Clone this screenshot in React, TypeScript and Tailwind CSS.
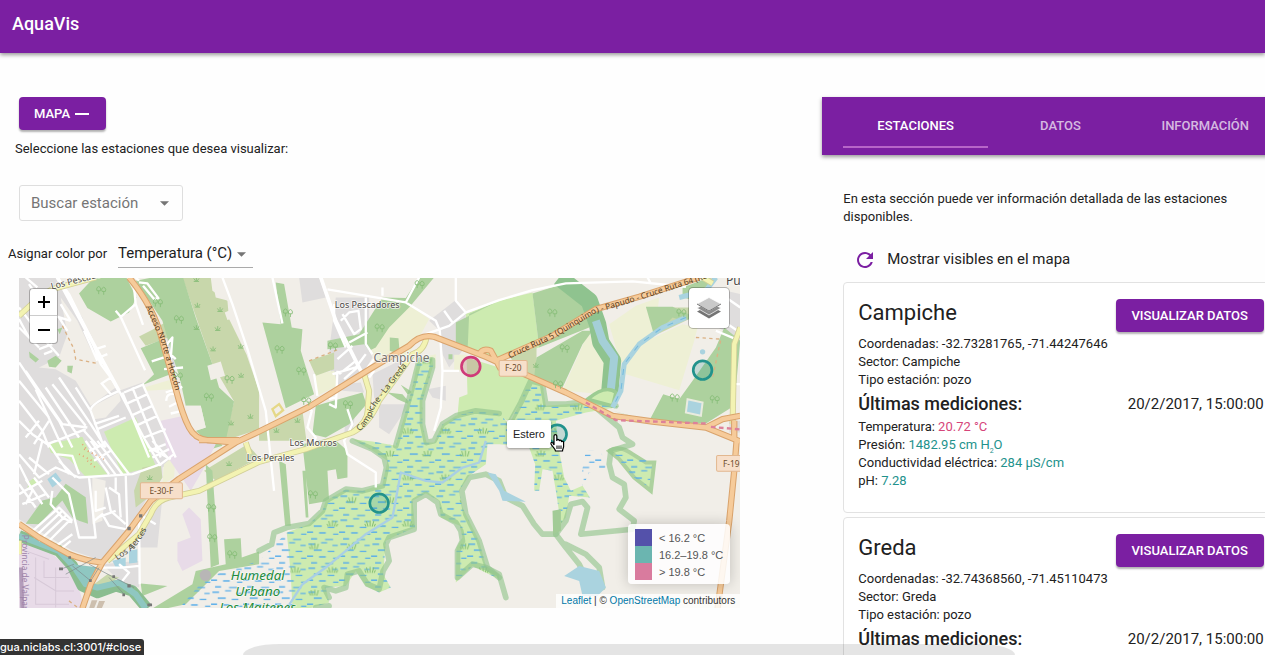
import React from 'react';

type Measure = { label: string; value: React.ReactNode; tone: string };
type Station = { name: string; coords: string; sector: string; kind: string; date: string; measures: Measure[] };

const pink = 'text-[#d6457a]';
const teal = 'text-[#22928c]';

const measures: Measure[] = [
  { label: 'Temperatura', value: '20.72 °C', tone: pink },
  { label: 'Presión', value: <>1482.95 cm H<sub className="-bottom-1 text-[7px]">2</sub>O</>, tone: teal },
  { label: 'Conductividad eléctrica', value: '284 μS/cm', tone: teal },
  { label: 'pH', value: '7.28', tone: teal },
];

const stations: Station[] = [
  { name: 'Campiche', coords: '-32.73281765, -71.44247646', sector: 'Campiche', kind: 'pozo', date: '20/2/2017, 15:00:00', measures },
  { name: 'Greda', coords: '-32.74368560, -71.45110473', sector: 'Greda', kind: 'pozo', date: '20/2/2017, 15:00:00', measures },
];

const raised = 'rounded-[4px] bg-[#7b1fa2] text-[13px] font-medium text-white shadow-[0_2px_2px_rgba(0,0,0,0.3)]';

const forest = [
  'M180 48L225 0H322L352 60L330 105L275 132L205 92Z',
  'M400 0H492L530 120L580 260L600 330L645 372L620 490H562L530 460L560 450L545 385L500 385L482 300L462 240L430 130L350 10Z',
  'M365 212L430 185L468 285L372 322L405 290Z',
  'M85 250L110 235L128 250L110 270L90 268Z', 'M145 265L162 265L158 288L145 282Z', 'M30 222L60 245L50 255L32 240Z', 'M115 155L130 150L122 170Z',
  'M20 739L70 669L110 659L140 619L200 659L207 739L180 730L160 719L130 669L90 709L60 740Z',
  'M560 560L580 580L600 860L575 870Z', 'M615 785L665 782L668 840L720 822V860L600 880L500 980L440 993L400 993L520 920L530 880L620 860Z', 'M365 918L445 925L370 955Z', 'M585 500L600 490L610 505L560 520Z',
  'M730 135L785 140L770 15L795 20L818 150L850 155L845 220L885 350L800 392Z',
  'M890 385L1030 345L1042 380L990 440L920 480L880 470Z',
  'M850 500L940 480L985 520L985 600L955 605L950 575L925 580L930 670L870 680Z',
  'M780 550L800 560L815 745H798Z', 'M850 580L860 580L868 720H860Z',
  'M925 190L1020 170L1090 60L1160 62L1200 0H1245L1172 88L1110 150L1070 210L1050 220L1035 200L925 215Z',
  'M1112 180L1138 182L1142 230L1112 220Z', 'M1145 322L1182 345L1165 350Z', 'M1105 345L1150 350L1180 385L1135 365Z', 'M1288 230H1300V245H1288Z',
  'M1310 135L1440 70L1350 110L1345 225L1310 212Z',
  'M1540 48L1630 20L1700 60L1740 110L1710 150L1560 210Z',
  'M1552 240L1690 160L1720 160L1690 200L1630 330L1545 298Z',
  'M1780 400L1890 430L1932 350L1980 365L2020 310L2090 210L2115 150L2163 190L2145 385L2060 438L1900 435Z',
  'M1880 88H1960L2030 120L1990 130L1960 120L1905 175Z', 'M1990 30L2070 0L2085 10L2010 65L1990 60Z',
];
const scrub = [
  'M490 0H575L580 40L625 70L630 125L682 230L720 340V455L615 490L645 372L580 260Z',
  'M360 177L400 157L465 120L470 172L380 205Z', 'M345 640L370 570L425 560L430 600L400 650L350 690Z', 'M555 580L685 500L720 540L590 610Z', 'M225 920L265 890L300 900L240 935Z',
  'M720 460L850 400L862 490L720 490Z', 'M870 250L945 225V275L890 295Z', 'M1465 225L1552 200V300L1500 285Z', 'M1930 90L2010 90L2020 120L1905 175Z',
];
const residential = [
  'M0 0H110L190 120L235 240L300 340L370 315L475 540L430 570L430 600L380 670L300 800L250 850L160 820L0 725Z',
  'M440 175L480 170L505 260L465 275Z', 'M370 740L420 680L430 660L415 810H360Z', 'M250 860L360 850V930L300 910Z',
  'M950 60L1050 60V220L1060 240L1030 290L940 330L930 220Z', 'M840 0H900L920 60L850 75Z', 'M1060 290L1150 245L1110 320L1080 380L1065 360Z',
  'M1080 380L1170 380L1150 410L1110 470L1080 450Z', 'M980 400L1010 400L1000 460L975 480Z', 'M1230 130L1310 68L1340 110L1330 220L1290 270L1270 230L1262 160Z', 'M1225 335L1280 325V370L1240 360Z',
  'M2080 140L2120 40L2163 50V190Z', 'M2130 430H2163V465H2130Z', 'M960 320L1025 315L1035 345L970 340Z',
];
const beige = [
  'M125 60L175 130L215 215L255 270L290 330L215 385L170 310L110 275L60 270L120 240L145 170Z', 'M220 600L260 610L250 730L220 740Z', 'M215 390L300 345L305 370L260 420L225 425Z',
  'M565 265L605 252L618 295L575 308Z', 'M500 385L545 385L560 450L530 460Z', 'M580 10L620 5L628 70L590 60Z', 'M617 105L640 95L650 120L625 128Z',
];
const grass = [
  'M255 463L350 420L410 565L310 590Z', 'M88 500L190 478L215 530L265 590L200 598L150 545L95 525Z',
  'M1340 110L1440 70L1540 45L1560 210L1440 245L1345 220Z', 'M1342 240L1440 270L1540 298L1500 380L1470 430L1370 402L1315 415L1320 360L1345 350Z', 'M30 612L50 598L55 615L25 632Z',
];
const farmland = [
  'M1050 200L1120 95L1170 82L1230 125L1200 180L1165 235L1070 250Z', 'M888 290L945 280L955 325L895 355Z', 'M1305 232H1342V280H1305Z', 'M375 330L460 305L480 320L455 335L385 340Z',
  'M1770 140L1850 85L1920 60L1905 180L1990 140L2035 150L2025 190L1980 338L1820 290L1790 210Z', 'M1705 170L1740 190L1765 260L1745 350L1630 338L1670 250Z', 'M1200 240L1250 230L1250 270L1180 290Z', 'M435 560L470 530L465 600L430 620Z',
];
const industry = [
  'M425 430L495 415L520 480L590 500L550 580L515 640L450 545Z', 'M0 780L100 830L160 880L185 950L195 993H0Z', 'M475 795L515 780L490 710L510 690L545 725L550 850L490 880L475 850Z',
];
const wetland =
  'M1310 415L1370 400L1440 408L1470 440L1500 380L1530 310L1570 320L1580 385L1640 380L1720 372L1800 388L1700 405L1610 430L1620 520L1635 600L1655 640L1690 625L1712 660L1650 655L1640 720L1625 738L1610 640L1600 580L1570 575L1560 640L1545 640L1548 560L1530 510L1440 500H1405L1400 560L1350 595L1320 640L1330 690L1380 790L1400 865L1440 890L1440 905L1360 865L1310 915L1312 810L1330 780L1322 745L1265 720L1260 670L1220 648L1180 670L1188 750L1140 770L1100 790L1092 890L1115 930L1080 945L1040 925L1010 880L980 925L920 930L930 975L870 993H820L815 890L803 765L870 740L910 700L920 670L980 635L1030 640L1090 620L1105 550L1060 520L1000 485L1060 492L1130 505L1160 400L1180 330L1195 250L1240 238L1242 265L1210 370L1210 440L1222 495L1245 495L1270 440Z';

const trunkRoads =
  'M330 0Q405 90 430 190L480 370Q500 440 520 465Q540 490 590 490L650 495L720 462L870 388L1060 270L1170 205Q1205 168 1245 178L1400 238L1500 283L1640 345L1780 415L1900 432L2060 450L2163 492M2060 450L2110 425L2163 415M1380 232Q1390 210 1415 220L1445 275M1430 250L1600 175L1730 95L1860 58L2040 0M650 495L480 604L395 670L330 760L250 855L215 920L190 993M0 739L60 780L150 830Q200 850 250 855M540 488H660M2145 430V480M2152 490L2145 580L2130 730L2095 993';
const secondaryRoads =
  'M0 115L60 60L100 35L230 0M265 850L360 770L395 710Q410 670 450 660L540 640L720 553L860 515L1000 465Q1050 430 1046 390L1050 340L1035 290M1000 465Q1050 440 1080 370L1160 260L1180 230Q1215 220 1222 180M2163 150L2145 200L2140 440M680 495L692 530M2050 0L2080 18M0 830V790';

const minorRoads = [
  'M115 0L150 50L215 180L245 260L275 300L300 340L390 510L455 545',
  'M290 100L305 118L378 278M305 118L350 80L345 30M350 80L372 142M350 0L360 10',
  'M360 15L385 18L418 62L405 65L372 25', 'M398 252L435 240M435 275L492 270M440 205L460 180L455 245M445 222L470 245M440 345L490 328M442 370Q440 345 470 350M450 388L485 370M455 408L490 400',
  'M0 255L50 330L120 430L160 510M0 310L90 420M20 280L130 440L205 450M0 370L70 460L90 510M50 335L130 510M80 330L180 480M100 320L200 445M120 300L215 440L260 510M170 330L215 400L255 510M195 460L240 510M215 400Q210 380 300 340M245 320L275 300M250 320L275 350',
  'M0 430L40 470L85 500L150 475L200 455M20 480L60 430M45 500L90 430M225 440L300 415M235 455L320 420',
  'M310 345L390 540M340 330L425 540M370 318L470 540M320 380L385 350M335 415L400 385M350 445L415 415M375 480L440 455M315 345L375 320',
  'M0 125L30 180M0 90L70 180L120 235M30 20L90 110L155 130M20 0L55 30M0 150L60 210M60 215L100 200M75 230L100 220M125 80L155 130M120 120L145 160',
  'M195 160L235 250M200 150L250 260M230 215L260 205M240 240L265 230',
  'M200 490L270 590M215 490L290 592M235 490L310 590M255 490L330 590M210 520L255 500M225 550L275 520M380 490L425 565M400 490L450 545M390 520L440 500M400 540L450 515',
  'M0 530L60 600L110 570L180 600L340 590L425 560L465 530M0 560L40 640L20 680M30 540L90 590M70 490L45 590M90 500L150 590M110 530L160 535L180 590M120 550L170 600M100 600L150 650L180 780L230 780L210 600',
  'M0 620L50 690M20 605L70 680M45 600L90 660M0 650L70 610M10 680L80 650M100 640L95 680L130 720L160 735',
  'M30 770L120 690L160 730M45 780L130 700M60 790L140 715M80 800L150 730M105 810L160 770M125 815L155 790',
  'M225 730L250 710L270 745L320 755M260 630L275 700L320 740M270 630L300 650L305 720M320 590L325 760M290 600V640M230 640V700L260 690M235 720L290 700',
  'M360 710L362 920M250 870L310 870L360 865M300 860L330 885L310 910M360 710L410 740', 'M610 0L640 80L685 215L740 400L765 640',
  'M905 0L950 130L1030 290', 'M925 36L1160 75L1250 130L1262 160L1270 280L1265 390L1245 460', 'M1090 30V55M1200 0L1160 75M1310 0V70L1340 105',
  'M1220 170L1290 145L1340 105L1440 68L1540 38L1640 18L1840 12L2000 28M1275 100L1300 135M1270 280H1320',
  'M1040 60V200L1060 230M965 130L990 105L1018 100L1025 155L1005 170L970 110M945 80V130L980 210M990 195L1045 165M940 290L1010 270L1040 230M960 290L1010 250M975 305L1020 265M955 280L950 390L930 380M950 360L930 365M885 290L895 355M860 390L878 400L865 450L890 480L880 510',
  'M985 395L1000 440L975 490L985 530L1070 585V630M760 0L790 138M1030 290L1065 245M1050 300L1065 280M1000 205L955 245',
  'M1885 0L1895 18M2110 130L2163 165M2120 60L2163 90M2090 160L2150 185M2140 320H2163',
];

const treeMarks: [number, number][] = [
  [245, 38], [415, 75], [478, 125], [630, 305], [568, 358], [475, 295], [780, 215], [845, 280], [860, 370], [985, 380], [805, 105], [940, 205], [1080, 150], [1200, 20], [1598, 105], [1635, 212], [1615, 320], [1965, 360], [2085, 365], [1985, 105], [575, 690], [578, 780], [638, 830], [880, 650],
];
const shrubMarks: [number, number][] = [
  [532, 8], [535, 85], [603, 98], [532, 152], [596, 155], [582, 216], [665, 208], [666, 295], [694, 418], [636, 438], [392, 602], [630, 560], [772, 460], [835, 430], [1550, 265],
];

function MapArt() {
  return (
    <svg className="block h-full w-full" viewBox="0 0 2163 993" preserveAspectRatio="xMidYMid slice" role="img" aria-label="Mapa de estaciones">
      <defs>
        <pattern id="marsh" width="96" height="72" patternUnits="userSpaceOnUse">
          <path d="M4 8h20M42 4h18M76 12h16M20 26h24M62 30h20M0 44h18M36 46h20M78 50h16M12 64h18M54 66h24" stroke="#58adea" strokeWidth="4" />
        </pattern>
        <pattern id="reeds" width="113" height="139" patternUnits="userSpaceOnUse">
          <path d="M30 52l-5-16M36 52v-18M42 52l5-16M24 52l-4-8M48 52l4-8M90 120l-5-16M96 120v-18M102 120l5-16M84 120l-4-8" stroke="#83bd70" strokeWidth="3" fill="none" />
        </pattern>
        <path id="lbl-acceso" d="M380 88L425 190L478 370" />
        <path id="lbl-ruta" d="M1472 243L1600 184L1730 107L1860 68L2090 -6" />
        <path id="lbl-greda" d="M1022 462Q1055 430 1066 392L1105 340L1190 232" />
        <path id="lbl-alerces" d="M295 848L345 815L375 770L400 720" />
      </defs>
      <rect width="2163" height="993" fill="#f1eee8" />
      <path d={residential.join('')} fill="#dfdddd" />
      <path d={beige.join('')} fill="#f1eee8" />
      <path d={farmland.join('')} fill="#eef0d5" />
      <path d={grass.join('')} fill="#cdebb0" />
      <path d={scrub.join('')} fill="#c8d7ab" />
      <path d={forest.join('')} fill="#add19e" />
      <path d={beige.slice(3).join('')} fill="#f1eee8" />
      <path d={industry.join('')} fill="#e8dbe8" />
      <g fill="none" stroke="#d7c9d8" strokeWidth="3">
        <path d="M50 840V980H150M75 850V900H150M45 900L110 940V990M110 870V940H165M20 820L90 845" />
      </g>

      <path d="M480 993L560 900L720 850L803 765L830 993Z" fill="url(#marsh)" />
      <path d={wetland} fill="#cdebb0" />
      <path d="M1770 520Q1800 500 1840 530L1880 555H1905L1895 640L1845 600L1800 545Z" fill="#cdebb0" stroke="#add19e" strokeWidth="12" />
      <path d={wetland} fill="url(#marsh)" />
      <path d={wetland} fill="url(#reeds)" />
      <path d="M1770 520L1840 530L1900 555L1890 630L1845 600Z" fill="url(#marsh)" />
      <path d="M1700 520H1745L1760 570L1710 585L1690 630L1685 600Z" fill="url(#marsh)" />
      <g fill="none" stroke="#8fc38a" strokeOpacity=".62" strokeWidth="17" strokeLinejoin="round" strokeLinecap="round">
        <path d="M720 820L758 800L765 765L803 750L870 738L910 700L920 670L980 635L1030 640L1090 625L1102 570L1095 540L1060 515L1000 490M1130 505L1160 400L1182 320L1200 248H1240L1240 270L1210 370V440L1222 495L1245 490L1270 440L1310 415L1370 400L1440 408" />
        <path d="M930 985L890 990M930 960L915 930L950 940L980 930L985 890L1020 880L1045 920L1080 935L1092 880L1110 850L1100 800L1110 780L1185 755L1185 670L1220 650L1255 675L1265 710L1310 735L1325 760L1330 790L1315 820V900L1360 860L1400 870L1440 890L1460 960" />
        <path d="M1440 900L1405 870L1380 790L1340 710L1328 640L1350 600L1400 590L1440 610L1460 660L1510 685L1545 740L1570 770H1610L1640 730L1655 680L1690 672L1705 690L1685 770L1840 755L1845 730L1800 695L1820 660L1815 620L1780 600L1770 560L1775 520L1840 500L1810 480L1800 450L1735 395" />
        <path d="M1610 770L1640 810L1680 860L1700 900M1640 800L1700 830L1740 870L1750 930M1610 770V710" />
        <path d="M1470 440L1505 375L1535 310L1570 320L1580 380L1640 380L1720 370L1790 385" />
      </g>
      <path d="M1600 700L1625 695L1625 760L1602 770Z" fill="#a2cb96" />
      <path d="M803 993L850 920L920 870L1040 770L1120 720L1145 585L1220 610L1270 615L1330 570L1380 555L1400 490" fill="none" stroke="#a9cfe5" strokeWidth="7" strokeLinejoin="round" />

      <path d="M1620 0L1710 70L1735 140L1745 195L1780 250L1770 365" fill="none" stroke="#8fc38f" strokeWidth="52" strokeLinejoin="round" />
      <path d="M1730 130L1750 190L1785 240L1775 335" fill="none" stroke="#a4cfd7" strokeWidth="24" strokeLinejoin="round" />
      <path d="M1705 365Q1760 320 1790 345L1780 385Z" fill="#cdebb0" stroke="#9ccc92" strokeWidth="10" />
      <path d="M2000 120L1930 150L1860 200L1815 260L1805 340L1780 390M1980 60L2060 40L2090 0" fill="none" stroke="#a9d3df" strokeWidth="15" strokeLinejoin="round" />
      <path d="M2000 120L1930 150L1860 200L1815 260L1805 340L1780 390" fill="none" stroke="#72b9df" strokeDasharray="18 24" strokeWidth="3" />
      <g fill="#aad3df">
        <path d="M1405 585L1430 590L1455 640L1520 673L1450 670L1440 640Z" />
        <path d="M1635 895L1680 865L1740 880L1760 930L1735 955H1690L1680 910Z" />
        <path d="M2005 365L2050 375L2045 415L2000 405Z" stroke="#e9ebdf" strokeWidth="6" /><circle cx="2050" cy="223" r="8" />
        <path d="M85 605L110 585L128 610L100 630ZM280 850L320 840V865L290 870ZM330 820L355 815V855L330 858Z" />
      </g>
      <path d="M0 775L120 820L160 865L190 925L235 945L290 925L340 940L385 993" fill="none" stroke="#8abd8f" strokeWidth="34" strokeLinejoin="round" />
      <path d="M0 775L120 820L165 868L200 920L235 930L300 915L350 950L380 993" fill="none" stroke="#8fc7c1" strokeWidth="18" strokeLinejoin="round" />
      <path d="M160 860L240 870L210 930Z" fill="#8fc7c1" />
      <circle cx="559" cy="893" r="17" fill="#b8b6b6" />
      <path d="M218 968H235L225 993H210ZM240 970H258L248 993H232Z" fill="#cdbfae" />

      <g fill="none" stroke="#fff" strokeWidth="7" strokeLinejoin="round"><path d={minorRoads.join('')} /></g>
      <path d="M905 0L950 130L1030 290M115 0L300 340" fill="none" stroke="#fff" strokeWidth="11" />
      <path d="M130 145L165 215L170 245L235 258M870 250L960 215M2030 180L2105 185L2080 300M150 970L180 993" fill="none" stroke="#dbb184" strokeDasharray="10 10" strokeWidth="4" />
      <path d="M180 530l40 20m-30-50l25 30m-10 20l30 25m-40-60l60 30" stroke="#e8a071" strokeDasharray="3 10" strokeWidth="5" />
      <g fill="none" strokeLinejoin="round">
        <path d={secondaryRoads} stroke="#d2cf98" strokeWidth="18" />
        <path d={secondaryRoads} stroke="#f3f3b2" strokeWidth="13" />
        <path d={trunkRoads} stroke="#d9a36c" strokeWidth="19" />
        <path d={trunkRoads} stroke="#f6cb9a" strokeWidth="13" />
        <path d="M1700 375L1790 428L2060 438M2075 448L2163 456" stroke="#dd819a" strokeWidth="7" strokeDasharray="14 10" />
        <path d="M140 890L230 840M210 860L285 900L345 930M160 865L215 910L240 870M315 950L270 900M125 875L165 860" stroke="#7f898b" strokeWidth="2" />
        <path d="M120 870h12v8h-12zM280 893h8v8h-8zM325 920h10v10h-10zM310 948h8v8h-8zM385 978h14v8h-14zM148 836h8v8h-8zM210 905h8v8h-8zM325 748h10v10h-10zM360 710h10v10h-10z" fill="#777" />
        <path d="M6 870L10 993" stroke="#9d83a8" strokeWidth="12" opacity=".7" />
      </g>
      <g fill="none" stroke="#86bd77" strokeWidth="2.6">
        {treeMarks.map(([x, y]) => (
          <path key={`${x}-${y}`} d={`M${x - 6} ${y + 12}v-10m-5 0a6 8 0 1 1 10 0zM${x + 9} ${y + 14}v-10m-5 0a6 8 0 1 1 10 0z`} />
        ))}
        {shrubMarks.map(([x, y]) => (
          <path key={`${x}-${y}`} d={`M${x - 8} ${y + 4}h16M${x} ${y + 3}v-12M${x - 2} ${y + 3}l-6-8M${x + 2} ${y + 3}l6-8`} />
        ))}
      </g>
      <path d="M760 395l20-15 12 18-22 18z" fill="none" stroke="#e5d887" strokeWidth="7" />

      <g fontFamily="'Noto Sans', sans-serif" fill="#4b4743" stroke="#fff" strokeOpacity=".75" strokeWidth="5" paintOrder="stroke" strokeLinejoin="round">
        <g fontSize="27">
          <text x="947" y="92">Los Pescadores</text>
          <text x="811" y="505">Los Morros</text>
          <text x="683" y="549">Los Perales</text>
          <text transform="translate(98 36) rotate(-14)">Los Pescadores</text>
        </g>
        <text x="1063" y="255" fontSize="36" fill="#77736f">Campiche</text>
        <text x="2120" y="22" fontSize="36">Puchuncaví</text>
      </g>
      <g fontFamily="'Noto Sans', sans-serif" fontSize="25" fill="#5a4124">
        <text><textPath href="#lbl-acceso">Acceso Norte a Horcón</textPath></text>
        <text><textPath href="#lbl-ruta">Cruce Ruta 5 (Quinquimo) - Papudo - Cruce Ruta 64 (Ref)</textPath></text>
        <text fill="#4e4d38"><textPath href="#lbl-greda">Campiche - La Greda</textPath></text>
        <text fill="#4e4d38"><textPath href="#lbl-alerces">Los Alerces</textPath></text>
        <text transform="translate(8 772) rotate(90)" fill="#9d83a8">Provincia de Valparaíso</text>
        <g fill="#f7dfca" stroke="#e2b78f" strokeWidth="3">
          <rect x="364" y="616" width="126" height="48" rx="4" />
          <rect x="1440" y="249" width="84" height="47" rx="4" />
          <rect x="2092" y="534" width="90" height="47" rx="4" />
        </g>
        <g fill="#6b4c2c" textAnchor="middle">
          <text x="427" y="650">E-30-F</text>
          <text x="1482" y="282">F-20</text>
          <text x="2136" y="567">F-19</text>
        </g>
      </g>
      <g fontFamily="'Noto Sans', sans-serif" fontSize="40" fontStyle="italic" fill="#228b39" stroke="#fff" strokeOpacity=".6" strokeWidth="4" paintOrder="stroke" textAnchor="middle">
        <text x="716" y="906">Humedal</text>
        <text x="716" y="955">Urbano</text>
        <text x="716" y="1003">Los Maitenes</text>
      </g>

      <g fill="#22928c" fillOpacity=".22" stroke="#22928c" strokeWidth="8">
        <circle cx="2050" cy="278" r="28" />
        <circle cx="1080" cy="677" r="28" />
        <circle cx="1614" cy="470" r="28" />
        <circle cx="1355" cy="267" r="28" stroke="#cf3a78" fill="#b5487a" />
      </g>
    </svg>
  );
}

function Caret({ className }: { className: string }) {
  return (
    <svg className={`pointer-events-none absolute h-[5px] w-[9px] ${className}`} viewBox="0 0 10 5" aria-hidden="true">
      <path d="M0 0h10L5 5z" fill="#757575" />
    </svg>
  );
}

function MapPanel() {
  const legend = [
    { label: '< 16.2 °C', swatch: 'bg-[#5451aa]' },
    { label: '16.2–19.8 °C', swatch: 'bg-[#6bb5b0]' },
    { label: '> 19.8 °C', swatch: 'bg-[#d97b9e]' },
  ];
  return (
    <div className="relative mr-[82px] ml-[19px] h-[330px] overflow-hidden font-['Liberation_Sans',sans-serif]">
      <MapArt />
      <div className="absolute top-[11px] left-[11px] flex flex-col rounded-[3px] bg-white text-black shadow-[0_0_0_1px_rgba(0,0,0,0.25)]">
        <button aria-label="Acercar" className="grid h-[27px] w-[27px] place-items-center border-b border-[#ccc]">
          <svg className="h-3 w-3" viewBox="0 0 12 12"><path d="M6 0v12M0 6h12" stroke="currentColor" strokeWidth="2" /></svg>
        </button>
        <button aria-label="Alejar" className="grid h-[27px] w-[27px] place-items-center">
          <svg className="h-3 w-3" viewBox="0 0 12 12"><path d="M0 6h12" stroke="currentColor" strokeWidth="2" /></svg>
        </button>
      </div>
      <button aria-label="Capas" className="absolute top-[10px] right-[11px] grid h-[40px] w-[40px] place-items-center rounded-[4px] bg-white shadow-[0_0_0_1px_rgba(0,0,0,0.25)]">
        <svg className="h-6 w-6" viewBox="0 0 24 24" aria-hidden="true">
          <path d="M0 15.500l12-6 12 6-12 7z" fill="#747474" />
          <path d="M0 12l12-6 12 6-12 7z" fill="#8d8d8d" stroke="#fff" strokeWidth=".7" />
          <path d="M0 8l12-6.500L24 8l-12 7z" fill="#c9c9c9" stroke="#fff" strokeWidth=".7" />
          <path d="M0 8l12 7 12-7" fill="none" stroke="#777" strokeWidth="1" />
        </svg>
      </button>
      <div className="absolute top-[142px] left-[488px] rounded-[2px] bg-white px-[6px] py-[5px] text-[11px] leading-[18px] text-[#222] shadow-[0_1px_3px_rgba(0,0,0,0.4)]">Estero</div>
      <svg className="absolute top-[155px] left-[530px] h-[19px] w-[16px]" viewBox="0 0 16 19" aria-hidden="true">
        <path d="M5 12V3a1.400 1.400 0 0 1 2.800 0v5V7.500a1.200 1.200 0 0 1 2.400 0V8a1.200 1.200 0 0 1 2.300 0v1a1.100 1.100 0 0 1 2.100 0v4.500c0 1.500-1.100 2.500-1.100 4.500H6.500c0-2-3-4-4.500-7-.5-1.300 1-2 2-1z" fill="#fff" stroke="#000" strokeWidth="1.200" />
        <path d="M8 12.500V16M10 12.500V16M12 12.500V16" stroke="#000" />
      </svg>
      <ul className="absolute right-[10px] bottom-[24px] rounded-[4px] bg-white/85 px-[7px] pt-[5px] pb-[4px] text-[11px] leading-[16px] text-[#555] shadow-[0_0_14px_rgba(0,0,0,0.2)]">
        {legend.map((row) => (
          <li key={row.label} className="flex items-end gap-[7px]">
            <span className={`h-[17px] w-[17px] ${row.swatch}`} />
            {row.label}
          </li>
        ))}
      </ul>
      <p className="absolute right-0 bottom-0 bg-white/80 px-[5px] text-[10px] leading-[14px] text-[#333]">
        <a href="#leaflet" className="text-[#0078a8]">Leaflet</a> | © <a href="#osm" className="text-[#0078a8]">OpenStreetMap</a> contributors
      </p>
    </div>
  );
}

function StationCard({ station }: { station: Station }) {
  return (
    <article className="mb-1 rounded-[4px] border border-[#e2e2e2] bg-white pt-4 pr-[13px] pb-[22px] pl-[14px] text-[13px] leading-[18px]">
      <div className="flex h-[36px] items-start justify-between">
        <h2 className="text-[22px] leading-[28px]">{station.name}</h2>
        <button className={`h-[33px] w-[148px] ${raised}`}>VISUALIZAR DATOS</button>
      </div>
      <p>Coordenadas: {station.coords}</p>
      <p>Sector: {station.sector}</p>
      <p>Tipo estación: {station.kind}</p>
      <div className="flex h-[29px] items-center justify-between">
        <h3 className="text-[18px] font-medium">Últimas mediciones:</h3>
        <time className="text-[15px]">{station.date}</time>
      </div>
      {station.measures.map((m) => (
        <p key={m.label}>{m.label}: <span className={m.tone}>{m.value}</span></p>
      ))}
    </article>
  );
}

export default function App() {
  return (
    <div className="relative h-screen overflow-hidden bg-[#fefefe] font-[Roboto,sans-serif] text-[#212121]">
      <header className="flex h-[53px] items-center bg-[#7b1fa2] px-3 pb-[6px] text-white shadow-[0_2px_4px_rgba(0,0,0,0.4)]">
        <h1 className="text-[18px] font-medium">AquaVis</h1>
      </header>
      <main className="grid grid-cols-[65%_36%] pt-[44px]">
        <section>
          <button className={`ml-[19px] flex h-[33px] w-[87px] items-center gap-[5px] pl-[15px] ${raised}`}>
            MAPA
            <svg className="h-[2px] w-[14px]" viewBox="0 0 14 2" aria-hidden="true"><path d="M0 1h14" stroke="#fff" strokeWidth="2" /></svg>
          </button>
          <p className="mt-[10px] ml-[15px] text-[13px] leading-[18px]">Seleccione las estaciones que desea visualizar:</p>
          <div className="relative mt-[27px] ml-[19px] h-[36px] w-[164px]">
            <select aria-label="Buscar estación" className="h-full w-full appearance-none rounded-[3px] border border-[#dedede] bg-transparent pl-[11px] text-[15px] text-[#757575]">
              <option>Buscar estación</option>
            </select>
            <Caret className="top-[16px] right-[14px]" />
          </div>
          <div className="mt-[18px] mb-[10px] ml-2 flex h-[29px] items-center gap-[11px]">
            <label htmlFor="color" className="text-[13px]">Asignar color por</label>
            <div className="relative h-full w-[135px]">
              <select id="color" className="h-full w-full appearance-none border-b border-[#aaa] bg-transparent text-[15px]">
                <option>Temperatura (°C)</option>
              </select>
              <Caret className="top-[13px] right-[7px]" />
            </div>
          </div>
          <MapPanel />
        </section>
        <section>
          <nav className="grid h-[58px] grid-cols-3 bg-[#7b1fa2] pb-[7px] pl-[21px] text-[13px] font-medium text-white/70 shadow-[0_2px_4px_rgba(0,0,0,0.4)]">
            <button className="border-b-2 border-[#b765c8] pt-[9px] text-white">ESTACIONES</button>
            <button className="pt-[7px]">DATOS</button>
            <button className="pt-[7px]">INFORMACIÓN</button>
          </nav>
          <div className="pt-[35px] pl-[21px]">
            <p className="max-w-[400px] text-[13px] leading-[18px]">En esta sección puede ver información detallada de las estaciones disponibles.</p>
            <button className="mt-[22px] mb-[11px] ml-[12px] flex items-center gap-[12px] text-[15px] leading-[23px]">
              <svg className="h-5 w-5" viewBox="2 2 20 20" fill="#7b1fa2" aria-hidden="true">
                <path d="M17.650 6.350C16.200 4.900 14.210 4 12 4c-4.420 0-7.990 3.580-7.990 8s3.570 8 7.990 8c3.730 0 6.840-2.550 7.730-6h-2.080c-.82 2.330-3.040 4-5.650 4-3.310 0-6-2.690-6-6s2.690-6 6-6c1.660 0 3.140.69 4.220 1.780L13 11h7V4l-2.350 2.350z" />
              </svg>
              Mostrar visibles en el mapa
            </button>
            {stations.map((s) => <StationCard key={s.name} station={s} />)}
          </div>
        </section>
      </main>
      <div className="absolute bottom-0 left-[243px] h-[11px] w-[61%] rounded-t-[36px_11px] bg-black/10" />
      <div className="absolute bottom-0 left-0 rounded-tr-[3px] bg-[#333] pr-[3px] font-[Inter,sans-serif] text-[11px] leading-4 font-medium text-white">gua.niclabs.cl:3001/#close</div>
    </div>
  );
}
